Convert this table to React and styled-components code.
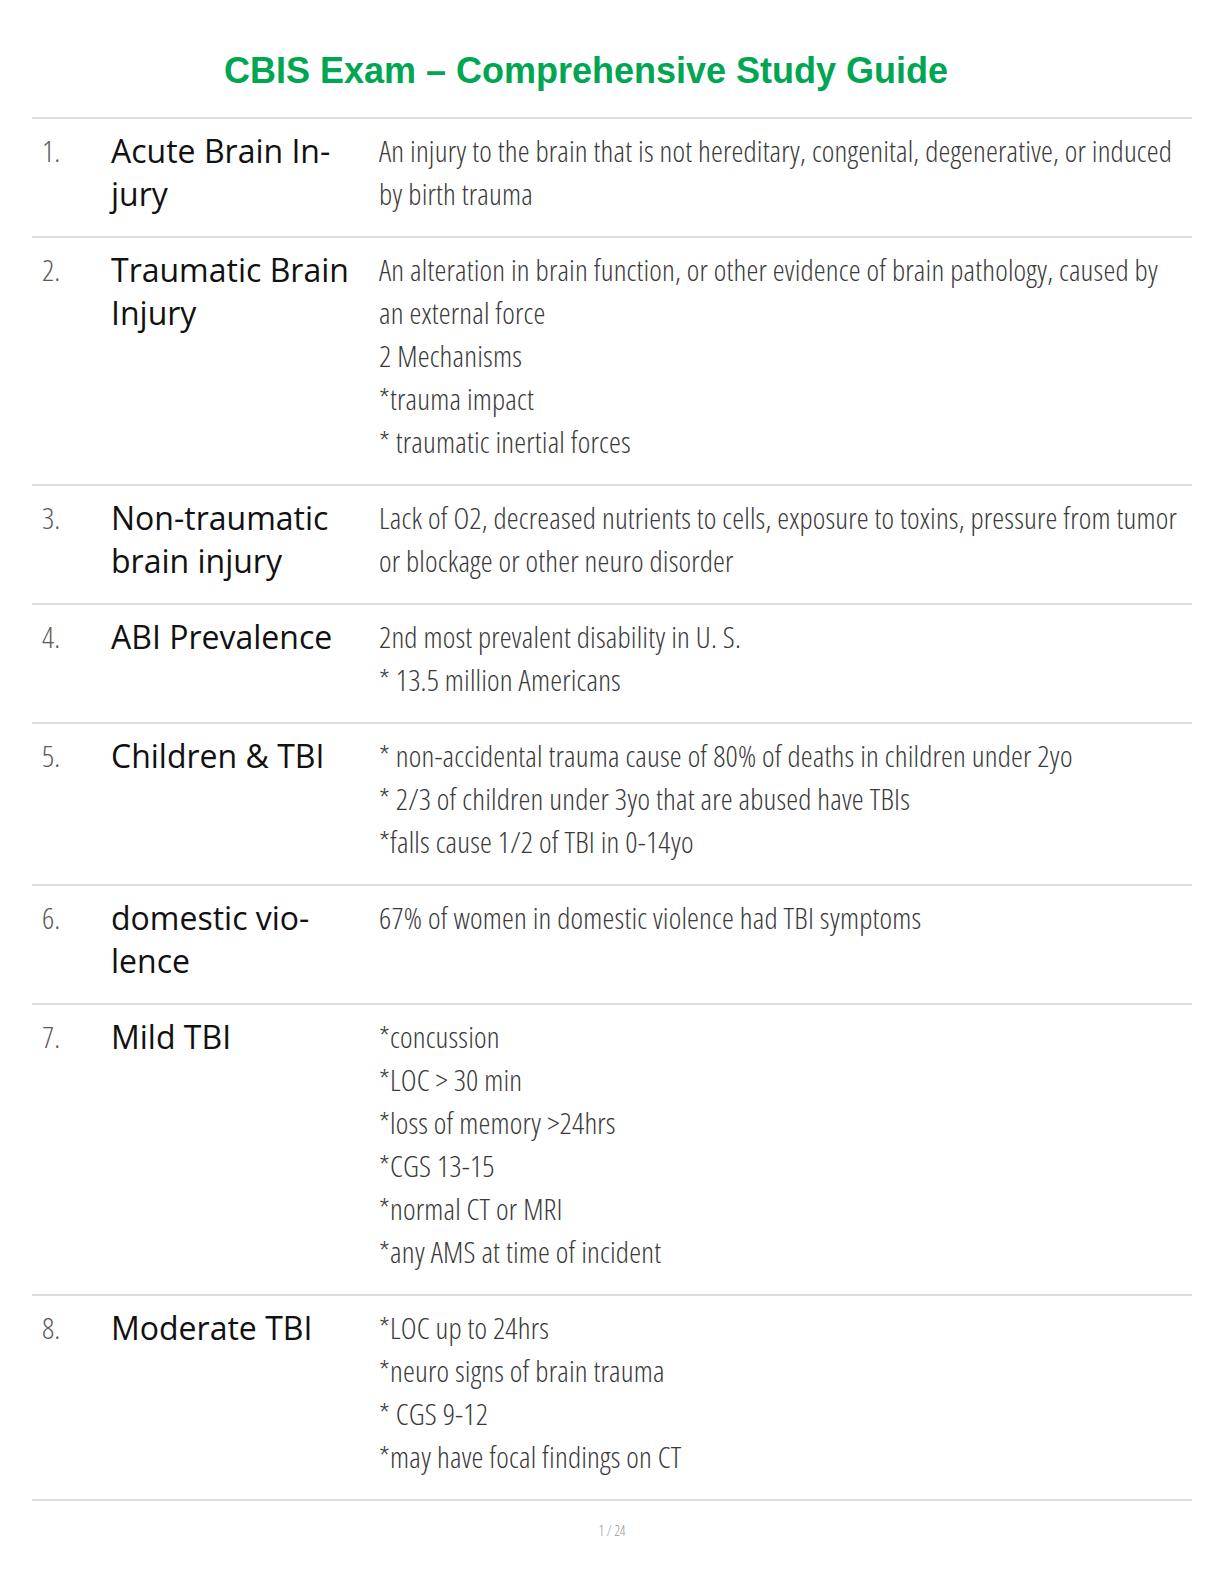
import React from "react";
import styled, { createGlobalStyle } from "styled-components";

const Global = createGlobalStyle`
  html, body { margin: 0; padding: 0; background: #ffffff; }
  body { font-family: "Open Sans", "Liberation Sans", sans-serif; }
`;

const Page = styled.div`
  width: 1224px;
  min-height: 1584px;
  background: #fff;
  padding-top: 50px;
  box-sizing: border-box;
`;

const Title = styled.h1`
  margin: 0 52px 0 0;
  padding: 0;
  text-align: center;
  font-family: "Liberation Sans", Arial, sans-serif;
  font-weight: 700;
  font-size: 36px;
  line-height: 41px;
  color: #00a651;
`;

const Table = styled.div`
  margin: 26px 32px 0 32px;
  border-bottom: 2px solid #dcdde2;
`;

const Row = styled.div`
  display: grid;
  grid-template-columns: 79px 268px 1fr;
  border-top: 2px solid #dcdde2;
  padding: 10px 0 21px 0;
`;

const Num = styled.div`
  padding-left: 10px;
  font-family: "Open Sans", sans-serif;
  font-weight: 300;
  font-stretch: 75%;
  font-size: 30px;
  line-height: 43px;
  color: #5a5a5a;
`;

const Term = styled.div`
  padding-right: 20px;
  font-family: "Open Sans", sans-serif;
  font-weight: 400;
  font-size: 32px;
  line-height: 43px;
  color: #111;
`;

const Def = styled.div`
  font-family: "Open Sans", sans-serif;
  font-weight: 300;
  font-stretch: 75%;
  font-size: 30px;
  letter-spacing: 0.17px;
  line-height: 43px;
  color: #3a3a3a;
`;

const Line = styled.div`
  white-space: nowrap;
`;

const Footer = styled.div`
  margin-top: 20px;
  text-align: center;
  font-family: "Open Sans", sans-serif;
  font-weight: 300;
  font-stretch: 75%;
  font-size: 14px;
  color: #999;
`;

const rows = [
  {
    term: "Acute Brain In\u00ADjury",
    lines: [
      "An injury to the brain that is not hereditary, congenital, degenerative, or induced",
      "by birth trauma",
    ],
  },
  {
    term: "Traumatic Brain Injury",
    lines: [
      "An alteration in brain function, or other evidence of brain pathology, caused by",
      "an external force",
      "2 Mechanisms",
      "*trauma impact",
      "* traumatic inertial forces",
    ],
  },
  {
    term: "Non-traumatic brain injury",
    lines: [
      "Lack of O2, decreased nutrients to cells, exposure to toxins, pressure from tumor",
      "or blockage or other neuro disorder",
    ],
  },
  {
    term: "ABI Prevalence",
    lines: ["2nd most prevalent disability in U. S.", "* 13.5 million Americans"],
  },
  {
    term: "Children & TBI",
    lines: [
      "* non-accidental trauma cause of 80% of deaths in children under 2yo",
      "* 2/3 of children under 3yo that are abused have TBIs",
      "*falls cause 1/2 of TBI in 0-14yo",
    ],
  },
  {
    term: "domestic vio\u00ADlence",
    lines: ["67% of women in domestic violence had TBI symptoms"],
  },
  {
    term: "Mild TBI",
    lines: [
      "*concussion",
      "*LOC > 30 min",
      "*loss of memory >24hrs",
      "*CGS 13-15",
      "*normal CT or MRI",
      "*any AMS at time of incident",
    ],
  },
  {
    term: "Moderate TBI",
    lines: [
      "*LOC up to 24hrs",
      "*neuro signs of brain trauma",
      "* CGS 9-12",
      "*may have focal findings on CT",
    ],
  },
];

export default function App() {
  return (
    <Page>
      <Global />
      <Title>CBIS Exam – Comprehensive Study Guide</Title>
      <Table>
        {rows.map((r, i) => (
          <Row key={i}>
            <Num>{i + 1}.</Num>
            <Term>{r.term}</Term>
            <Def>
              {r.lines.map((l, j) => (
                <Line key={j}>{l}</Line>
              ))}
            </Def>
          </Row>
        ))}
      </Table>
      <Footer>1 / 24</Footer>
    </Page>
  );
}
